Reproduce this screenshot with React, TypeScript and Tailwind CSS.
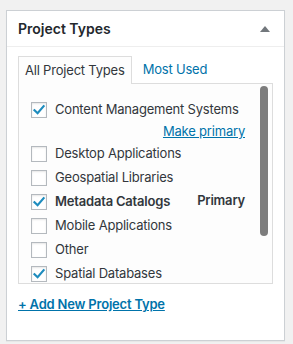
import { ReactNode } from 'react';

const items = [
  { label: 'Content Management Systems', checked: true, makePrimary: true },
  { label: 'Desktop Applications', checked: false },
  { label: 'Geospatial Libraries', checked: false },
  { label: 'Metadata Catalogs', checked: true, primary: true },
  { label: 'Mobile Applications', checked: false },
  { label: 'Other', checked: false },
  { label: 'Spatial Databases', checked: true },
];

function Checkbox({ checked }: { checked: boolean }) {
  return (
    <span className="w-4 h-4 shrink-0 border border-[#b4b9be] bg-white shadow-[inset_0_1px_2px_rgba(0,0,0,0.1)] flex items-center justify-center">
      {checked && (
        <svg width="14" height="14" viewBox="0 0 14 14">
          <path d="M2.5 7.2 L5.6 10.2 L11.6 3.2" fill="none" stroke="#1e8cbe" strokeWidth="2.2" strokeLinecap="square" />
        </svg>
      )}
    </span>
  );
}

function Row({ children }: { children: ReactNode }) {
  return <div className="h-6 flex items-center gap-2">{children}</div>;
}

export default function App() {
  return (
    <div className="min-h-screen bg-[#f1f1f1] pt-[10px] px-[6px] text-[13px] tracking-[-0.2px] text-[#32373c] font-['Inter',sans-serif]">
      <div className="w-[279px] bg-white border border-[#ccd0d4] shadow-[0_1px_1px_rgba(0,0,0,0.04)]">
        <div className="h-[36px] flex items-center justify-between pl-[11px] pr-3 border-b border-[#eeeeee]">
          <h2 className="text-[14px] font-semibold tracking-normal text-[#23282d]">Project Types</h2>
          <svg width="10" height="6" viewBox="0 0 10 6" className="mr-[2px]">
            <path d="M0 6 L5 0 L10 6 Z" fill="#72777c" />
          </svg>
        </div>
        <div className="px-[11px] pt-[9px] pb-[25px]">
          <div className="flex items-end">
            <div className="h-[28px] px-[6px] flex items-center border border-[#dddddd] border-b-0 bg-[#fdfdfd] -mb-px relative z-10">
              All Project Types
            </div>
            <div className="h-[27px] px-[11px] flex items-center text-[#0073aa]">Most Used</div>
          </div>
          <div className="relative h-[201px] border border-[#dddddd] bg-[#fdfdfd] overflow-hidden">
            <div className="pl-3 pr-[27px] pt-[14px]">
              {items.map((it) => (
                <div key={it.label}>
                  <Row>
                    <Checkbox checked={it.checked} />
                    <span className={it.primary ? 'font-semibold flex-1' : 'flex-1'}>{it.label}</span>
                    {it.primary && <span className="font-semibold -mt-[2px]">Primary</span>}
                  </Row>
                  {it.makePrimary && (
                    <div className="h-5 flex items-center justify-end">
                      <a className="text-[#0073aa] underline">Make primary</a>
                    </div>
                  )}
                </div>
              ))}
            </div>
            <div className="absolute right-[4px] top-[2px] w-[8px] h-[150px] rounded-full bg-[#7d7d7d]" />
          </div>
          <div className="mt-[11px]">
            <a className="text-[#0073aa] font-semibold underline">+ Add New Project Type</a>
          </div>
        </div>
      </div>
    </div>
  );
}
